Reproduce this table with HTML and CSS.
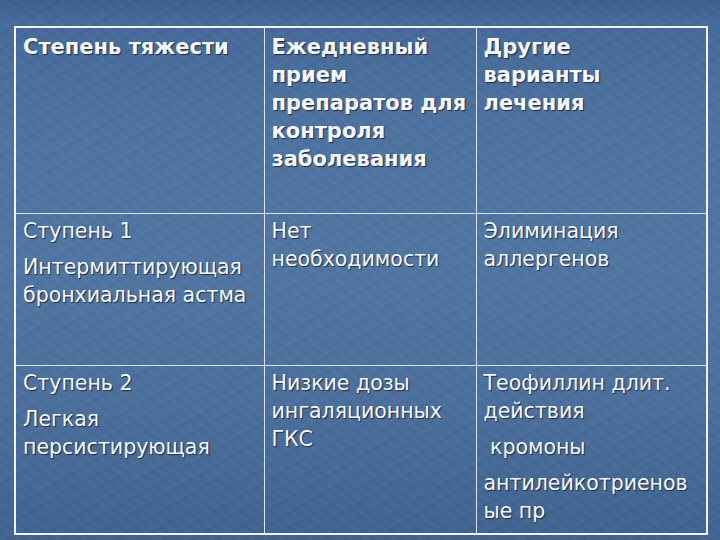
FILE: index.html
```html
<!DOCTYPE html>
<html lang="ru">
<head>
<meta charset="utf-8">
<link rel="stylesheet" href="styles.css">
</head>
<body>
<div class="slide">
  <table class="grid">
    <colgroup><col class="c1"><col class="c2"><col class="c3"></colgroup>
    <tr class="r1">
      <th><p>Степень тяжести</p></th>
      <th><p>Ежедневный прием препаратов для контроля заболевания</p></th>
      <th><p>Другие<br>варианты лечения</p></th>
    </tr>
    <tr class="r2">
      <td><p>Ступень 1</p><p>Интермиттирующая бронхиальная астма</p></td>
      <td><p>Нет необходимости</p></td>
      <td><p>Элиминация аллергенов</p></td>
    </tr>
    <tr class="r3">
      <td><p>Ступень 2</p><p>Легкая персистирующая</p></td>
      <td><p>Низкие дозы ингаляционных ГКС</p></td>
      <td><p>Теофиллин длит. действия</p><p>&nbsp;кромоны</p><p>антилейкотриенов ые пр</p></td>
    </tr>
  </table>
</div>
</body>
</html>
```

FILE: styles.css
```css
html, body {
  margin: 0;
  padding: 0;
}
body {
  width: 720px;
  height: 540px;
  overflow: hidden;
}
.slide {
  width: 720px;
  height: 540px;
  box-sizing: border-box;
  padding: 26px 0 0 14px;
  background:
    repeating-linear-gradient(150deg, rgba(255,255,255,0.02) 0 2px, rgba(0,0,0,0.012) 2px 6px, rgba(255,255,255,0.008) 6px 13px),
    repeating-linear-gradient(40deg, rgba(255,255,255,0.01) 0 4px, rgba(0,0,0,0.01) 4px 9px),
    linear-gradient(180deg, #3d5f8d 0px, #45699a 22px, #4d72a0 120px, #5075a3 260px, #4b6f9d 400px, #3f6290 540px);
  font-family: "DejaVu Sans", Verdana, sans-serif;
  color: #f4f7fb;
}
.grid {
  table-layout: fixed;
  border-collapse: collapse;
  width: 692px;
  border: 2px solid #eef4fa;
}
.c1 { width: 249px; }
.c2 { width: 212px; }
.c3 { width: 231px; }
.grid th, .grid td {
  border: 1px solid #d6e3f0;
  vertical-align: top;
  text-align: left;
  padding: 5px 4px 0 7px;
}
.grid td {
  padding-top: 3px;
}
.r1 { height: 186px; }
.r2 { height: 152px; }
.r3 { height: 162px; }
.grid p {
  margin: 0 0 8px 0;
  text-shadow: 1px 1px 1px rgba(20, 35, 60, 0.85);
}
.grid th p {
  font-weight: bold;
  font-size: 21px;
  line-height: 28px;
}
.grid td p {
  font-weight: normal;
  font-size: 20.5px;
  line-height: 28px;
}
```
